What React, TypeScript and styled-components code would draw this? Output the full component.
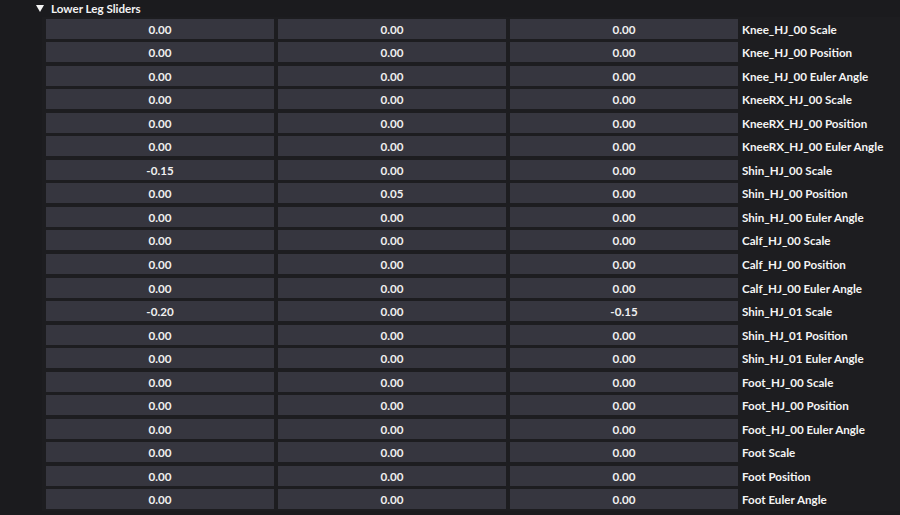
import React from 'react';
import styled, { createGlobalStyle } from 'styled-components';

const GlobalStyle = createGlobalStyle`
	html, body {
		margin: 0;
		padding: 0;
		background: #1b1b1e;
		font-family: 'Lato', 'Roboto', sans-serif;
	}
`;

const Page = styled.div`
	width: 900px;
	height: 515px;
	overflow: hidden;
	background: #1b1b1e;
	color: #f2f2f2;
`;

const Header = styled.div`
	display: flex;
	align-items: center;
	gap: 7px;
	height: 17px;
	padding-left: 36px;
	font-size: 11.6px;
	font-weight: 700;
`;

const Triangle = styled.span`
	width: 0;
	height: 0;
	border-left: 4px solid transparent;
	border-right: 4px solid transparent;
	border-top: 7px solid #f4f4f4;
`;

const Panel = styled.div`
	margin-left: 42px;
	padding: 1.5px 0 2px 4px;
	background: #1d1d20;
	display: grid;
	grid-template-columns: 228px 228px 228px auto;
	column-gap: 4px;
	row-gap: 3.55px;
	grid-auto-rows: 20px;
`;

const Cell = styled.div`
	background: #36363f;
	display: flex;
	align-items: center;
	justify-content: center;
	padding-top: 1px;
	font-size: 11.6px;
	font-weight: 700;
	color: #f0f0f0;
`;

const Label = styled.div`
	display: flex;
	align-items: center;
	padding-top: 1px;
	font-size: 11.6px;
	font-weight: 700;
	color: #f4f4f4;
	white-space: nowrap;
`;

type Row = { name: string; values: [string, string, string] };

const rows: Row[] = [
	{ name: 'Knee_HJ_00 Scale', values: ['0.00', '0.00', '0.00'] },
	{ name: 'Knee_HJ_00 Position', values: ['0.00', '0.00', '0.00'] },
	{ name: 'Knee_HJ_00 Euler Angle', values: ['0.00', '0.00', '0.00'] },
	{ name: 'KneeRX_HJ_00 Scale', values: ['0.00', '0.00', '0.00'] },
	{ name: 'KneeRX_HJ_00 Position', values: ['0.00', '0.00', '0.00'] },
	{ name: 'KneeRX_HJ_00 Euler Angle', values: ['0.00', '0.00', '0.00'] },
	{ name: 'Shin_HJ_00 Scale', values: ['-0.15', '0.00', '0.00'] },
	{ name: 'Shin_HJ_00 Position', values: ['0.00', '0.05', '0.00'] },
	{ name: 'Shin_HJ_00 Euler Angle', values: ['0.00', '0.00', '0.00'] },
	{ name: 'Calf_HJ_00 Scale', values: ['0.00', '0.00', '0.00'] },
	{ name: 'Calf_HJ_00 Position', values: ['0.00', '0.00', '0.00'] },
	{ name: 'Calf_HJ_00 Euler Angle', values: ['0.00', '0.00', '0.00'] },
	{ name: 'Shin_HJ_01 Scale', values: ['-0.20', '0.00', '-0.15'] },
	{ name: 'Shin_HJ_01 Position', values: ['0.00', '0.00', '0.00'] },
	{ name: 'Shin_HJ_01 Euler Angle', values: ['0.00', '0.00', '0.00'] },
	{ name: 'Foot_HJ_00 Scale', values: ['0.00', '0.00', '0.00'] },
	{ name: 'Foot_HJ_00 Position', values: ['0.00', '0.00', '0.00'] },
	{ name: 'Foot_HJ_00 Euler Angle', values: ['0.00', '0.00', '0.00'] },
	{ name: 'Foot Scale', values: ['0.00', '0.00', '0.00'] },
	{ name: 'Foot Position', values: ['0.00', '0.00', '0.00'] },
	{ name: 'Foot Euler Angle', values: ['0.00', '0.00', '0.00'] },
];

export default function App() {
	return (
		<Page>
			<GlobalStyle />
			<Header>
				<Triangle />
				Lower Leg Sliders
			</Header>
			<Panel>
				{rows.map(row => (
					<React.Fragment key={row.name}>
						{row.values.map((v, i) => (
							<Cell key={i}>{v}</Cell>
						))}
						<Label>{row.name}</Label>
					</React.Fragment>
				))}
			</Panel>
		</Page>
	);
}
